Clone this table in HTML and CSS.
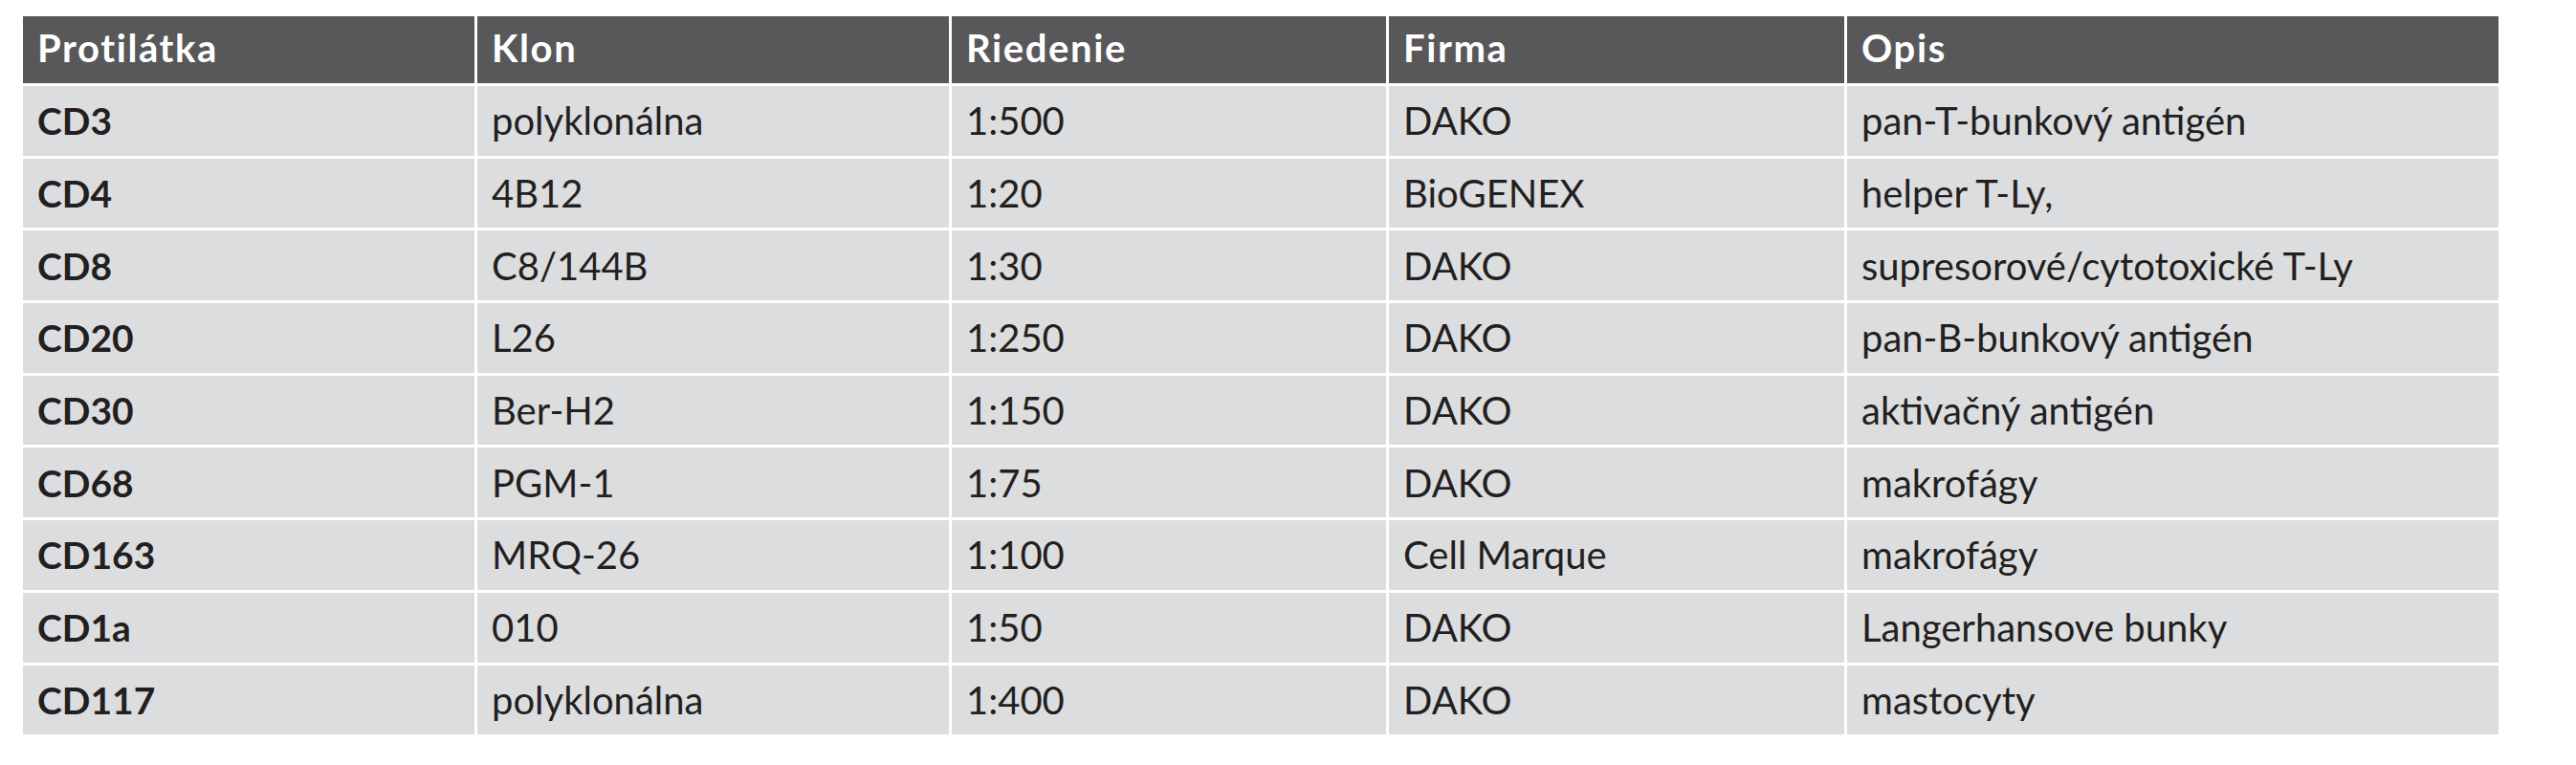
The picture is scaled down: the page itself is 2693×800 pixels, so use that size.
FILE: index.html
```html
<!DOCTYPE html>
<html lang="sk">
<head>
<meta charset="utf-8">
<title>Protilátky</title>
<link rel="stylesheet" href="styles.css">
</head>
<body>
<div class="page">
  <div class="grid">
    <div class="cell head">Protilátka</div>
    <div class="cell head">Klon</div>
    <div class="cell head">Riedenie</div>
    <div class="cell head">Firma</div>
    <div class="cell head">Opis</div>

    <div class="cell name">CD3</div>
    <div class="cell">polyklonálna</div>
    <div class="cell">1:500</div>
    <div class="cell">DAKO</div>
    <div class="cell">pan-T-bunkový antigén</div>

    <div class="cell name">CD4</div>
    <div class="cell">4B12</div>
    <div class="cell">1:20</div>
    <div class="cell">BioGENEX</div>
    <div class="cell">helper T-Ly,</div>

    <div class="cell name">CD8</div>
    <div class="cell">C8/144B</div>
    <div class="cell">1:30</div>
    <div class="cell">DAKO</div>
    <div class="cell">supresorové/cytotoxické T-Ly</div>

    <div class="cell name">CD20</div>
    <div class="cell">L26</div>
    <div class="cell">1:250</div>
    <div class="cell">DAKO</div>
    <div class="cell">pan-B-bunkový antigén</div>

    <div class="cell name">CD30</div>
    <div class="cell">Ber-H2</div>
    <div class="cell">1:150</div>
    <div class="cell">DAKO</div>
    <div class="cell">aktivačný antigén</div>

    <div class="cell name">CD68</div>
    <div class="cell">PGM-1</div>
    <div class="cell">1:75</div>
    <div class="cell">DAKO</div>
    <div class="cell">makrofágy</div>

    <div class="cell name">CD163</div>
    <div class="cell">MRQ-26</div>
    <div class="cell">1:100</div>
    <div class="cell">Cell Marque</div>
    <div class="cell">makrofágy</div>

    <div class="cell name">CD1a</div>
    <div class="cell">010</div>
    <div class="cell">1:50</div>
    <div class="cell">DAKO</div>
    <div class="cell">Langerhansove bunky</div>

    <div class="cell name">CD117</div>
    <div class="cell">polyklonálna</div>
    <div class="cell">1:400</div>
    <div class="cell">DAKO</div>
    <div class="cell">mastocyty</div>
  </div>
</div>
</body>
</html>
```

FILE: styles.css
```css
html, body {
  margin: 0;
  padding: 0;
  background: #ffffff;
}

.page {
  padding: 17px 0 0 24px;
  width: 2693px;
  height: 800px;
  box-sizing: border-box;
  overflow: hidden;
}

.grid {
  display: grid;
  grid-template-columns: 472px 493px 454px 476px 681px;
  grid-template-rows: 70px repeat(9, 72.7px);
  gap: 3px;
  width: 2588px;
  background: #ffffff;
}

.cell {
  background: #dcdddf;
  color: #231f20;
  font-family: Lato, "Open Sans", sans-serif;
  font-size: 40px;
  padding-left: 15px;
  display: flex;
  align-items: center;
  white-space: nowrap;
  overflow: hidden;
}

.cell.head {
  background: #58585a;
  color: #ffffff;
  font-weight: 700;
  letter-spacing: 1.6px;
  padding-bottom: 4px;
}

.cell.name {
  font-weight: 700;
  font-size: 39px;
}
```
